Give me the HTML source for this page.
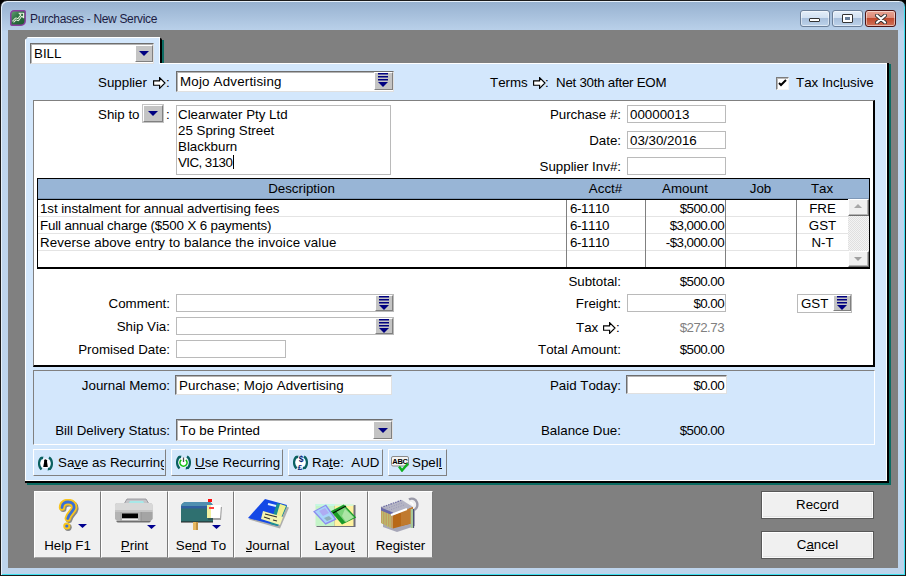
<!DOCTYPE html>
<html><head><meta charset="utf-8">
<style>
*{margin:0;padding:0;box-sizing:border-box}
html,body{width:906px;height:576px;overflow:hidden;background:#000}
body{position:relative;font-family:"Liberation Sans",sans-serif;font-size:13px;color:#000}
.a{position:absolute}
.t{position:absolute;white-space:nowrap;font-size:13.33px;line-height:16px;font-kerning:none}
.r{text-align:right}
.c{text-align:center}
u{text-decoration:none;border-bottom:1px solid #000;line-height:11px;display:inline-block}
#win{left:0;top:0;width:906px;height:576px;background:linear-gradient(#97b2d0 1px,#9bb5d3 4px,#b9d0e9 29px,#bfd5ed 30px,#bdd4ec);border:1px solid #1b1b1b;border-radius:7px 7px 0 0;box-shadow:inset 1px 1px 0 #e6f0fa,inset -1px -1px 0 #3ee0f0}
#client{left:8px;top:30px;width:890px;height:538px;background:#808080}
#tab{left:25px;top:37px;width:135px;height:27px;background:#D3E7FC;clip-path:polygon(3px 0,100% 0,100% 100%,0 100%,0 3px);box-shadow:inset 1px 1px 0 #fff,inset -1px 0 0 #f0f8ff}
#tabk{left:160px;top:38px;width:2px;height:25px;background:#000;border-radius:0 2px 0 0}
#tabteal{left:162px;top:40px;width:2px;height:23px;background:#0b6b62}
#panel{left:25px;top:63px;width:862px;height:418px;background:#D3E7FC;box-shadow:inset 1px 1px 0 #fff,inset -1px -1px 0 #fff}
#pr1{left:887px;top:63px;width:2px;height:420px;background:#000}
#pr2{left:889px;top:64px;width:2px;height:421px;background:#0b6b62}
#pb1{left:25px;top:481px;width:864px;height:2px;background:#000}
#pb2{left:27px;top:483px;width:864px;height:2px;background:#0b6b62}
#white{left:33px;top:100px;width:842px;height:267px;background:#fff;border-top:1px solid #808080;border-left:1px solid #808080;border-right:2px solid #000;border-bottom:2px solid #000}
#lower{left:33px;top:370px;width:842px;height:75px;border-top:1px solid #808080;border-left:1px solid #808080;border-right:1px solid #fff;border-bottom:1px solid #fff}
.inp{position:absolute;background:#fff;border:1px solid #bababa}
.sunk{position:absolute;background:#fff;border-top:1px solid #6e6e6e;border-left:1px solid #6e6e6e;border-right:1px solid #e0e0e0;border-bottom:1px solid #e0e0e0;box-shadow:inset 1px 1px 0 #b4b4b4}
.ddb{position:absolute;background:#c4c4c4;border-top:1px solid #fff;border-left:1px solid #fff;border-right:1px solid #808080;border-bottom:1px solid #808080}
.tri{position:absolute;width:0;height:0;border-left:5px solid transparent;border-right:5px solid transparent;border-top:5px solid #000080}
.bars{position:absolute;width:10px;height:15px}
.rb{position:absolute;background:#D3E7FC;border-top:1px solid #fff;border-left:1px solid #fff;border-right:1px solid #808080;border-bottom:1px solid #808080}
.tb{position:absolute;top:491px;height:67px;background:#f0f0f0;border-left:1px solid #fff;border-top:1px solid #fff;border-right:1px solid #7a7a7a;border-bottom:1px solid #a0a0a0}
.pb{position:absolute;background:#f0f0f0;border:1px solid #585858;box-shadow:inset 1px 1px 0 #fff,inset -1px -1px 0 #fafafa,inset -2px -2px 0 #e4e4e4}
.cap{position:absolute;top:10px;height:17px;border-radius:3px;border:1px solid #6b7f99;background:linear-gradient(#e4eef9 0,#d2e1f2 45%,#a9c0dc 50%,#bcd2ea 100%);box-shadow:inset 0 0 0 1px rgba(255,255,255,.5)}
</style></head><body>
<div id="win" class="a"></div>
<!-- title -->
<svg class="a" style="left:10px;top:10px" width="16" height="16" viewBox="0 0 16 16">
<defs><linearGradient id="ig" x1="0" y1="0" x2="1" y2="1"><stop offset="0" stop-color="#6aa478"/><stop offset=".45" stop-color="#2a7040"/><stop offset="1" stop-color="#1c5a2e"/></linearGradient></defs>
<path d="M4 0.8h10.2c.6 0 1 .4 1 1V11c0 2.4-1.8 4.2-4.2 4.2H1.8c-.6 0-1-.4-1-1V4C.8 2.2 2.2.8 4 .8z" fill="url(#ig)" stroke="#8a3fa0" stroke-width="1.5"/>
<path d="M3 11.8L5.8 8.8 8.2 9.8 10.5 6.5 12.2 4.6" fill="none" stroke="#e6f2de" stroke-width="2.6" stroke-linejoin="round"/><path d="M9 3.2h4.6v4.6z" fill="#2a6a3a" stroke="#e6f2de" stroke-width="1.1" stroke-linejoin="round"/>
<path d="M3 11.8L5.8 8.8 8.2 9.8 10.5 6.5 12.5 4.3" fill="none" stroke="#2a6a3a" stroke-width="0.9"/>
</svg>
<div class="t" style="left:30px;top:12px;font-size:12px;line-height:14px;letter-spacing:-0.33px;color:#1c1c44">Purchases - New Service</div>
<div class="cap" style="left:800px;width:30px"><div class="a" style="left:8px;top:7px;width:11px;height:4px;background:#fff;border:1px solid #333;border-radius:1px"></div></div>
<div class="cap" style="left:832px;width:31px"><div class="a" style="left:9px;top:3px;width:11px;height:9px;background:#fff;border:1px solid #333;border-radius:1px"><div class="a" style="left:2px;top:2px;width:5px;height:3px;background:#6a7f9a"></div></div></div>
<div class="cap" style="left:865px;width:31px;border-color:#4e1414;background:linear-gradient(#e9a493 0,#dc8a78 45%,#c24a2e 50%,#d0735a 100%)">
<svg class="a" style="left:9px;top:3px" width="12" height="10" viewBox="0 0 12 10"><path d="M2 1.5L10 8.5M10 1.5L2 8.5" stroke="#333" stroke-width="4" stroke-linecap="round"/><path d="M2 1.5L10 8.5M10 1.5L2 8.5" stroke="#fff" stroke-width="2.2" stroke-linecap="round"/></svg></div>

<div id="client" class="a"></div>
<div id="panel" class="a"></div>
<div id="tab" class="a"></div><div id="tabk" class="a"></div>
<div id="tabteal" class="a"></div>
<div id="pr1" class="a"></div><div id="pr2" class="a"></div><div id="pb1" class="a"></div><div id="pb2" class="a"></div>
<div id="white" class="a"></div>
<div id="lower" class="a"></div>

<!-- BILL combo -->
<div class="sunk" style="left:30px;top:43px;width:124px;height:21px"></div>
<div class="t" style="left:34px;top:46px">BILL</div>
<div class="ddb" style="left:135px;top:45px;width:18px;height:17px"><div class="tri" style="left:3px;top:5px"></div></div>

<!-- Supplier -->
<div class="t" style="left:98px;top:75px">Supplier</div>
<svg class="a" style="left:153px;top:77px" width="14" height="12" viewBox="0 0 14 12"><path d="M0.6 3.8h6v-3.2l5.4 5.4-5.4 5.4v-3.2h-6z" fill="#fff" stroke="#000" stroke-width="1.15"/></svg>
<div class="t" style="left:166px;top:75px">:</div>
<div class="sunk" style="left:176px;top:71px;width:218px;height:21px"></div>
<div class="t" style="left:180px;top:74px;letter-spacing:0.2px">Mojo Advertising</div>
<div class="ddb" style="left:374px;top:72px;width:19px;height:18px"><svg class="a" style="left:2.5px;top:-1px" width="11" height="16" viewBox="0 0 11 16"><path d="M0 1.75h10M0 4.75h10M0 7.75h10" stroke="#000080" stroke-width="1.3"/><path d="M0 10h10l-5 5z" fill="#000080"/></svg></div>

<div class="t" style="left:490px;top:75px">Terms</div>
<svg class="a" style="left:533px;top:77px" width="14" height="12" viewBox="0 0 14 12"><path d="M0.6 3.8h6v-3.2l5.4 5.4-5.4 5.4v-3.2h-6z" fill="#fff" stroke="#000" stroke-width="1.15"/></svg>
<div class="t" style="left:545px;top:75px">:</div>
<div class="t" style="left:556px;top:75px;letter-spacing:-0.25px">Net 30th after EOM</div>
<div class="a" style="left:776px;top:77px;width:13px;height:13px;background:#fff;border-top:1px solid #7c7c7c;border-left:1px solid #7c7c7c;border-right:1px solid #f4f4f4;border-bottom:1px solid #f4f4f4;box-shadow:inset 1px 1px 0 #b8b8b8"></div>
<svg class="a" style="left:778px;top:79px" width="9" height="9" viewBox="0 0 9 9"><path d="M1 4l2 2 5-5" fill="none" stroke="#000" stroke-width="2"/></svg>
<div class="t" style="left:796px;top:75px">Tax Inc<u>l</u>usive</div>

<!-- Ship to -->
<div class="t" style="left:98px;top:107px">Ship to</div>
<div class="ddb" style="left:143px;top:105px;width:20px;height:17px;box-shadow:0 0 0 1px #c4c4c4"><div class="tri" style="left:4px;top:5px"></div></div>
<div class="t" style="left:166px;top:107px">:</div>
<div class="inp" style="left:176px;top:105px;width:215px;height:70px"></div>
<div class="t" style="left:178px;top:107px">Clearwater Pty Ltd<br>25 Spring Street<br>Blackburn<br><span style="letter-spacing:-0.55px">VIC, 3130</span></div>
<div class="a" style="left:233px;top:155px;width:1px;height:14px;background:#000"></div>

<div class="t r" style="left:501px;width:120px;top:107px">Purchase #:</div>
<div class="inp" style="left:627px;top:105px;width:99px;height:18px"></div>
<div class="t" style="left:630px;top:107px">00000013</div>
<div class="t r" style="left:501px;width:120px;top:133px">Date:</div>
<div class="inp" style="left:627px;top:131px;width:99px;height:18px"></div>
<div class="t" style="left:630px;top:133px">03/30/2016</div>
<div class="t r" style="left:501px;width:120px;top:159px">Supplier Inv#:</div>
<div class="inp" style="left:627px;top:157px;width:99px;height:18px"></div>

<!-- table -->
<div class="a" style="left:37px;top:178px;width:833px;height:91px;border:1px solid #000;border-width:1px 2px 2px 1px;background:#fff"></div>
<div class="a" style="left:38px;top:179px;width:831px;height:21px;background:#98b5d6;border-bottom:1px solid #000;box-shadow:inset 0 -1px 0 #7e98b8"></div>
<div class="t c" style="left:37px;width:529px;top:181px">Description</div>
<div class="t c" style="left:566px;width:79px;top:181px">Acct#</div>
<div class="t c" style="left:645px;width:80px;top:181px">Amount</div>
<div class="t c" style="left:725px;width:71px;top:181px">Job</div>
<div class="t c" style="left:796px;width:52px;top:181px">Tax</div>
<div class="a" style="left:38px;top:216px;width:810px;height:1px;background:#e4e4e4"></div>
<div class="a" style="left:38px;top:233px;width:810px;height:1px;background:#e4e4e4"></div>
<div class="a" style="left:38px;top:250px;width:810px;height:1px;background:#e4e4e4"></div>
<div class="a" style="left:566px;top:200px;width:1px;height:67px;background:#808080"></div>
<div class="a" style="left:645px;top:200px;width:1px;height:67px;background:#808080"></div>
<div class="a" style="left:725px;top:200px;width:1px;height:67px;background:#808080"></div>
<div class="a" style="left:796px;top:200px;width:1px;height:67px;background:#808080"></div>
<div class="t" style="left:40px;top:201px;letter-spacing:-0.07px">1st instalment for annual advertising fees</div>
<div class="t" style="left:40px;top:218px;letter-spacing:-0.15px">Full annual charge ($500 X 6 payments)</div>
<div class="t" style="left:40px;top:235px;letter-spacing:0.11px">Reverse above entry to balance the invoice value</div>
<div class="t" style="left:570px;top:201px;letter-spacing:-0.4px">6-1110</div>
<div class="t" style="left:570px;top:218px;letter-spacing:-0.4px">6-1110</div>
<div class="t" style="left:570px;top:235px;letter-spacing:-0.4px">6-1110</div>
<div class="t r" style="left:640px;width:84px;top:201px;letter-spacing:-0.55px">$500.00</div>
<div class="t r" style="left:640px;width:84px;top:218px;letter-spacing:-0.55px">$3,000.00</div>
<div class="t r" style="left:640px;width:84px;top:235px;letter-spacing:-0.55px">-$3,000.00</div>
<div class="t c" style="left:797px;width:51px;top:201px">FRE</div>
<div class="t c" style="left:797px;width:51px;top:218px">GST</div>
<div class="t c" style="left:797px;width:51px;top:235px">N-T</div>
<!-- scrollbar -->
<div class="a" style="left:848px;top:200px;width:21px;height:67px;background:repeating-conic-gradient(#f4f4f4 0 25%,#e0e0e0 0 50%) 0 0/2px 2px"></div>
<div class="a" style="left:848px;top:199px;width:21px;height:17px;background:#efefef;border-top:1px solid #fff;border-left:1px solid #fff;border-right:1px solid #6e6e6e;border-bottom:1px solid #6e6e6e;box-shadow:inset -1px -1px 0 #b4b4b4"></div>
<div class="a" style="left:854px;top:204px;width:0;height:0;border-left:4px solid transparent;border-right:4px solid transparent;border-bottom:4px solid #a8a8a8"></div>
<div class="a" style="left:848px;top:251px;width:21px;height:16px;background:#efefef;border-top:1px solid #fff;border-left:1px solid #fff;border-right:1px solid #6e6e6e;border-bottom:1px solid #6e6e6e;box-shadow:inset -1px -1px 0 #b4b4b4"></div>
<div class="a" style="left:854px;top:257px;width:0;height:0;border-left:4px solid transparent;border-right:4px solid transparent;border-top:4px solid #a0a0a0"></div>

<!-- totals -->
<div class="t r" style="left:101px;width:69px;top:296px">Comment:</div>
<div class="inp" style="left:176px;top:294px;width:218px;height:18px"></div>
<div class="ddb" style="left:375px;top:295px;width:18px;height:16px"><svg class="a" style="left:2.5px;top:-1px" width="11" height="16" viewBox="0 0 11 16"><path d="M0 1.75h10M0 4.75h10M0 7.75h10" stroke="#000080" stroke-width="1.3"/><path d="M0 10h10l-5 5z" fill="#000080"/></svg></div>
<div class="t r" style="left:101px;width:69px;top:319px">Ship Via:</div>
<div class="inp" style="left:176px;top:317px;width:218px;height:18px"></div>
<div class="ddb" style="left:375px;top:318px;width:18px;height:16px"><svg class="a" style="left:2.5px;top:-1px" width="11" height="16" viewBox="0 0 11 16"><path d="M0 1.75h10M0 4.75h10M0 7.75h10" stroke="#000080" stroke-width="1.3"/><path d="M0 10h10l-5 5z" fill="#000080"/></svg></div>
<div class="t r" style="left:41px;width:129px;top:342px">Promised Date:</div>
<div class="inp" style="left:176px;top:340px;width:110px;height:18px"></div>

<div class="t r" style="left:501px;width:120px;top:274px">Subtotal:</div>
<div class="t r" style="left:640px;width:84px;top:274px;letter-spacing:-0.55px">$500.00</div>
<div class="t r" style="left:501px;width:120px;top:296px">Freight:</div>
<div class="inp" style="left:627px;top:294px;width:99px;height:18px"></div>
<div class="t r" style="left:640px;width:84px;top:296px;letter-spacing:-0.55px">$0.00</div>
<div class="t" style="left:576px;top:320px">Tax</div>
<svg class="a" style="left:603px;top:322px" width="14" height="12" viewBox="0 0 14 12"><path d="M0.6 3.8h6v-3.2l5.4 5.4-5.4 5.4v-3.2h-6z" fill="#fff" stroke="#000" stroke-width="1.15"/></svg>
<div class="t" style="left:616px;top:320px">:</div>
<div class="t r" style="left:640px;width:84px;top:320px;letter-spacing:-0.55px;color:#808080">$272.73</div>
<div class="t r" style="left:501px;width:120px;top:342px">Total Amount:</div>
<div class="t r" style="left:640px;width:84px;top:342px;letter-spacing:-0.55px">$500.00</div>
<div class="inp" style="left:797px;top:294px;width:55px;height:19px"></div>
<div class="t" style="left:801px;top:296px">GST</div>
<div class="ddb" style="left:833px;top:295px;width:18px;height:16px"><svg class="a" style="left:2.5px;top:-1px" width="11" height="16" viewBox="0 0 11 16"><path d="M0 1.75h10M0 4.75h10M0 7.75h10" stroke="#000080" stroke-width="1.3"/><path d="M0 10h10l-5 5z" fill="#000080"/></svg></div>

<!-- lower section -->
<div class="t r" style="left:41px;width:129px;top:378px">Journal Memo:</div>
<div class="sunk" style="left:175px;top:375px;width:217px;height:20px"></div>
<div class="t" style="left:179px;top:378px;letter-spacing:0.1px">Purchase; Mojo Advertising</div>
<div class="t r" style="left:41px;width:129px;top:423px">Bill Delivery Status:</div>
<div class="sunk" style="left:176px;top:419px;width:217px;height:22px"></div>
<div class="t" style="left:180px;top:423px">To be Printed</div>
<div class="ddb" style="left:373px;top:421px;width:19px;height:18px"><div class="tri" style="left:4px;top:6px"></div></div>
<div class="t r" style="left:501px;width:120px;top:378px">Paid Today:</div>
<div class="sunk" style="left:626px;top:375px;width:101px;height:19px"></div>
<div class="t r" style="left:640px;width:84px;top:378px;letter-spacing:-0.55px">$0.00</div>
<div class="t r" style="left:501px;width:120px;top:423px">Balance Due:</div>
<div class="t r" style="left:640px;width:84px;top:423px;letter-spacing:-0.55px">$500.00</div>

<!-- recurring buttons -->
<div class="rb" style="left:33px;top:449px;width:133px;height:27px"></div>
<div class="t" style="left:58px;top:455px;width:106px;overflow:hidden">Sa<u>v</u>e as Recurring</div>
<div class="rb" style="left:171px;top:449px;width:112px;height:27px"></div>
<div class="t" style="left:195px;top:455px"><u>U</u>se Recurring</div>
<div class="rb" style="left:288px;top:449px;width:95px;height:27px"></div>
<div class="t" style="left:312px;top:455px">Ra<u>t</u>e:&nbsp; AUD</div>
<div class="rb" style="left:388px;top:449px;width:59px;height:27px"></div>
<div class="t" style="left:412px;top:455px">Spel<u>l</u></div>

<!-- toolbar -->
<div class="tb" style="left:34px;width:67px"></div>
<div class="tb" style="left:101px;width:67px"></div>
<div class="tb" style="left:168px;width:66px"></div>
<div class="tb" style="left:234px;width:67px"></div>
<div class="tb" style="left:301px;width:67px"></div>
<div class="tb" style="left:368px;width:65px"></div>
<div class="t c" style="left:34px;width:67px;top:538px">Help F1</div>
<div class="t c" style="left:101px;width:67px;top:538px"><u>P</u>rint</div>
<div class="t c" style="left:168px;width:66px;top:538px">Se<u>n</u>d To</div>
<div class="t c" style="left:234px;width:67px;top:538px"><u>J</u>ournal</div>
<div class="t c" style="left:301px;width:67px;top:538px">Layou<u>t</u></div>
<div class="t c" style="left:368px;width:65px;top:538px">Register</div>


<!-- recurring icons -->
<svg class="a" style="left:37px;top:456px" width="17" height="15" viewBox="0 0 17 15"><path d="M5 1.5C1.5 3.5 1 10 4.5 13.5M12 1.5C15.5 3.5 16 10 12.5 13.5" fill="none" stroke="#0a6060" stroke-width="2.3"/><path d="M3.2 1.2l3.2-.6-.6 3.2zM13.8 13.8l-3.2.6.6-3.2z" fill="#0a6060"/><circle cx="8.5" cy="7.5" r="5" fill="#fff"/><path d="M7 5a1.6 1.6 0 1 1 3 0.8L10.8 11H6.2L7.2 5.8z" fill="#000"/></svg>
<svg class="a" style="left:175px;top:455px" width="17" height="15" viewBox="0 0 17 15"><path d="M5 1.5C1.5 3.5 1 10 4.5 13.5M12 1.5C15.5 3.5 16 10 12.5 13.5" fill="none" stroke="#0a6060" stroke-width="2.3"/><path d="M3.2 1.2l3.2-.6-.6 3.2zM13.8 13.8l-3.2.6.6-3.2z" fill="#0a6060"/><circle cx="8.5" cy="7.5" r="5" fill="#fff"/><path d="M6.3 4.8A3.6 3.6 0 1 0 10.7 4.8" fill="none" stroke="#10c010" stroke-width="1.5"/><path d="M8.5 2.5v4.5" stroke="#505050" stroke-width="1.3"/></svg>
<svg class="a" style="left:292px;top:455px" width="17" height="15" viewBox="0 0 17 15"><path d="M5 1.5C1.5 3.5 1 10 4.5 13.5M12 1.5C15.5 3.5 16 10 12.5 13.5" fill="none" stroke="#0a6060" stroke-width="2.3"/><path d="M3.2 1.2l3.2-.6-.6 3.2zM13.8 13.8l-3.2.6.6-3.2z" fill="#0a6060"/><circle cx="8.5" cy="7.5" r="5" fill="#fff"/><text x="9" y="7.2" font-family="Liberation Sans" font-weight="bold" font-size="8.5" fill="#001a70" text-anchor="middle">$</text><text x="8" y="14.5" font-family="Liberation Sans" font-weight="bold" font-size="8" fill="#001a70" text-anchor="middle">&#163;</text></svg>
<svg class="a" style="left:391px;top:456px" width="19" height="16" viewBox="0 0 19 16"><rect x="0.5" y="0.5" width="17" height="9.5" rx="1.5" fill="#f4f4f4" stroke="#8a8a8a"/><text x="9" y="8.3" font-family="Liberation Sans" font-weight="bold" font-size="7.5" fill="#000" text-anchor="middle" letter-spacing="-0.3">ABC</text><path d="M8 10.5l3 4 6-7" fill="none" stroke="#10b020" stroke-width="2.4"/></svg>

<!-- toolbar icons -->
<svg class="a" style="left:57px;top:499px" width="32" height="33" viewBox="0 0 32 33">
<g transform="translate(1.3,1.3)" opacity="0.5"><path d="M5 8.5C5 4 8.5 3 11 3c4 0 6.5 2.3 6 6-.5 3.5-5 5-6.2 10.5" fill="none" stroke="#202020" stroke-width="6.4" stroke-linecap="round"/><circle cx="9.8" cy="27" r="3.6" fill="#202020"/></g>
<path d="M5 8.5C5 4 8.5 3 11 3c4 0 6.5 2.3 6 6-.5 3.5-5 5-6.2 10.5" fill="none" stroke="#f9c51c" stroke-width="6.4" stroke-linecap="round"/>
<path d="M5 8.5C5 4 8.5 3 11 3c4 0 6.5 2.3 6 6-.5 3.5-5 5-6.2 10.5" fill="none" stroke="#3a6fd6" stroke-width="2.8" stroke-linecap="round"/>
<circle cx="9.8" cy="27" r="3.6" fill="#f9c51c"/><circle cx="9.8" cy="27" r="1.6" fill="#3a6fd6"/>
<path d="M21 25h9l-4.5 4z" fill="#000090"/>
</svg>
<svg class="a" style="left:113px;top:497px" width="44" height="34" viewBox="0 0 44 34">
<path d="M14 2h19l3 5H11z" fill="#c4c4c8" stroke="#8a8a90" stroke-width="0.8"/>
<path d="M17 4h13l1.5 2.5H15.5z" fill="#a8e8e8"/>
<path d="M4 6h33c1.5 0 2.5 1 2.5 2.5V22l-2 2H4l-2-2V8.5C2 7 3 6 4 6z" fill="#b4b4b4"/>
<path d="M4 6h33c1.5 0 2.5 1 2.5 2.5V13H2V8.5C2 7 3 6 4 6z" fill="#d8d8d8"/>
<path d="M2 13h37.5v2H2z" fill="#c4c4c4"/>
<path d="M28 15h11.5v7l-2 2H28z" fill="#a4a4a4"/><path d="M28 15v9" stroke="#909090" stroke-width=".8"/>
<path d="M8 15v9" stroke="#9a9a9a" stroke-width=".8"/>
<rect x="9" y="16.5" width="16" height="5" fill="#000"/><rect x="9" y="21.5" width="16" height="1.5" fill="#f0f0f0"/>
<path d="M3 24h35l-1.5 1.5H4.5z" fill="#707070"/>
<path d="M34 28h9l-4.5 4z" fill="#000090"/>
</svg>
<svg class="a" style="left:179px;top:497px" width="44" height="35" viewBox="0 0 44 35">
<path d="M8 5h21c3 0 5 2 5 5v15H2V10c0-3 2-5 6-5z" fill="#2f7070"/>
<path d="M8 5h21c3 0 5 2 5 5H2c0-3 2-5 6-5z" fill="#4f8fb0"/>
<rect x="2" y="9" width="32" height="2.5" fill="#3060a0"/>
<rect x="2" y="24" width="32" height="2" fill="#202020" opacity=".5"/>
<rect x="14" y="25" width="5" height="8" fill="#e8b860"/><rect x="17" y="25" width="2" height="8" fill="#c09040"/>
<rect x="29" y="2" width="4" height="3" fill="#ff1010"/>
<path d="M29 9l-1 13h13l1-13z" fill="#303030" opacity=".4" transform="translate(1,1)"/><path d="M28 8h14l-1 13H28z" fill="#fff"/><path d="M28 8h4v13h-4z" fill="#f0f0a0"/><rect x="30" y="10" width="5" height="2" fill="#ff4040"/>
<path d="M33 28h9l-4.5 4z" fill="#000090"/>
</svg>
<svg class="a" style="left:246px;top:498px" width="45" height="33" viewBox="0 0 45 33">
<path d="M20 2l22 6-9 21-31-9z" fill="#303030" opacity=".35" transform="translate(1,1.5)"/>
<path d="M19 1l22 6-9 21L2 20z" fill="#1448e6"/>
<path d="M31 5l10 3-9 20-8-2z" fill="#1c9090"/>
<path d="M34 6l6 2-5 12-5-1z" fill="#f0f090"/>
<path d="M17 13l20 6-3 8-19-6z" fill="#f4f4b0"/><path d="M19 16l12 3M18 19l6 2M27 22l4 1" stroke="#303030" stroke-width="1.2"/>
<path d="M22 6l8 2" stroke="#e0f0ff" stroke-width="2"/>
</svg>
<svg class="a" style="left:309px;top:497px" width="52" height="34" viewBox="0 0 52 34">
<rect x="7.5" y="8" width="39" height="22" fill="#1a1a2a" opacity=".6"/>
<rect x="6.5" y="7" width="19" height="22" fill="#c4f4c8"/><rect x="25.5" y="7" width="19" height="22" fill="#fff2a0"/>
<rect x="6.5" y="7" width="38" height="2" fill="#c8f8f0" opacity=".7"/>
<path d="M4 14.5L17 7.4 27.7 22.4 16.5 27.7z" fill="#8c8cf0"/>
<path d="M6 14.5L16.5 9 25.5 22 16.5 26z" fill="#a8d4fa"/>
<path d="M10 14l6-3 4 5-6 3z" fill="#b0a0f0" opacity=".8"/><path d="M15 21l5-2 3 3-5 2z" fill="#80a0a0" opacity=".7"/>
<path d="M21.8 14.2L34.8 7.4 47.2 20.4 33 27.4z" fill="#1a9a28"/>
<path d="M27 14l8-4.5 10 10.5-9 5z" fill="#7cd47c"/>
<path d="M36 12l9 8.5-8 4.5-4-6z" fill="#b8e8b0" opacity=".8"/>
<path d="M24 16l13-7" stroke="#001a00" stroke-width="1.3"/>
</svg>
<svg class="a" style="left:375px;top:495px" width="52" height="38" viewBox="0 0 52 38">
<path d="M7 17L28 7l11 7v16l-18 6-14-5z" fill="#202050" opacity=".35" transform="translate(1,1)"/>
<path d="M6 12.5L27 5l11 7-20 8.5z" fill="#b4b4c4"/>
<path d="M6 12.5l21-7.5" stroke="#6a6aa0" stroke-width="1.2" stroke-dasharray="1.5 1"/>
<path d="M7 15l20-7M9 17l20-7" stroke="#8888b0" stroke-width=".7" stroke-dasharray="1 1.5"/>
<path d="M6 12.5v15.5l12 5.5V20.5z" fill="#c49a60"/>
<path d="M7.5 14v15M10 15v15.5M12.5 16v16M15 17.5v15.5" stroke="#b8c070" stroke-width="1.2"/>
<path d="M6 12.5v3l12 5v-3z" fill="#6868a8"/>
<path d="M18 20.5l20-8.5v16l-20 5.5z" fill="#b86818"/><path d="M26 17l12-5v16l-12 3z" fill="#c07a30"/>
<path d="M16 20l16-6" stroke="#fff" stroke-width="2"/>
<path d="M34 4.5a5.5 6 0 1 1 4 11" fill="none" stroke="#9a9aa8" stroke-width="2.4"/>
<path d="M38 10.5a3 3.5 0 0 0-3-3" fill="none" stroke="#fff" stroke-width="1.5"/>
<path d="M37 14v19" stroke="#a8c898" stroke-width="2.6"/><path d="M38.6 14v19" stroke="#404070" stroke-width="1"/>
</svg>

<!-- Record/Cancel -->
<div class="pb" style="left:761px;top:491px;width:113px;height:28px"></div>
<div class="t c" style="left:761px;width:113px;top:497px">Rec<u>o</u>rd</div>
<div class="pb" style="left:761px;top:531px;width:113px;height:28px"></div>
<div class="t c" style="left:761px;width:113px;top:537px">C<u>a</u>ncel</div>

</body></html>
